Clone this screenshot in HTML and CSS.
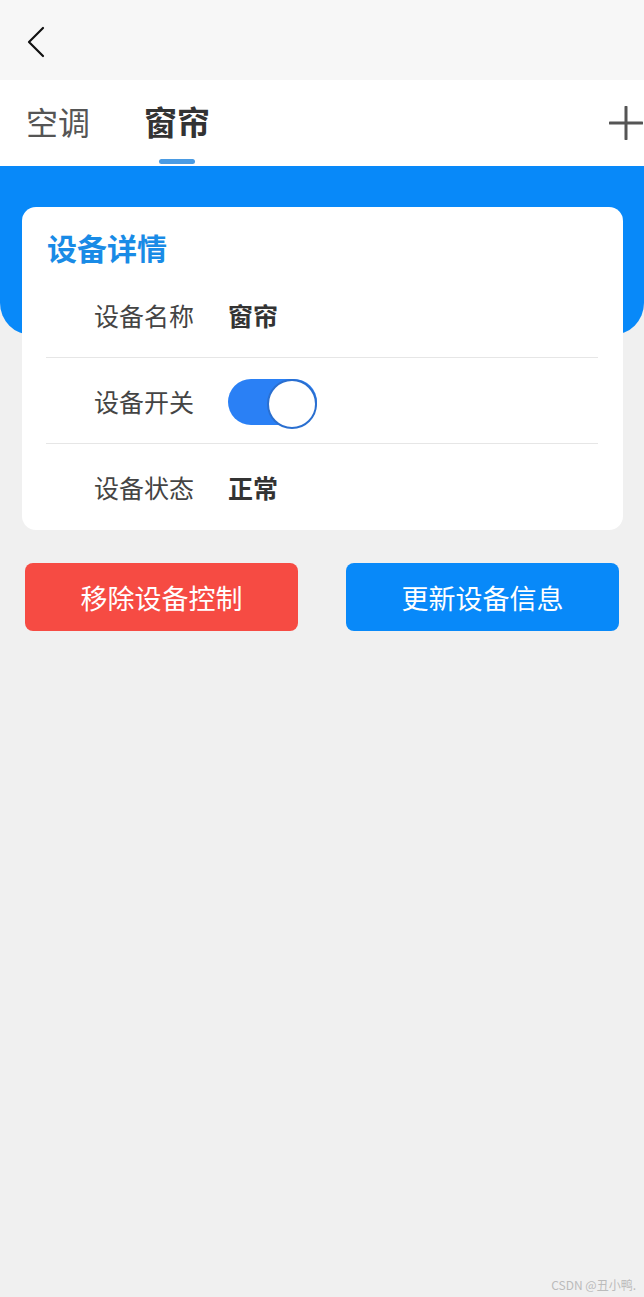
FILE: index.html
```html
<!DOCTYPE html>
<html lang="zh-CN">

<head>
    <meta charset="UTF-8">
    <meta name="viewport" content="width=device-width, initial-scale=1.0">
    <title>设备详情</title>
    <link rel="stylesheet" href="styles.css">
</head>

<body>
    <div class="page">
        <header class="topbar">
            <svg class="back" width="24" height="34" viewBox="0 0 24 34">
                <path d="M19 3 L5 17 L19 31" fill="none" stroke="#111" stroke-width="2.2" stroke-linecap="round" stroke-linejoin="round" />
            </svg>
        </header>

        <nav class="tabs">
            <div class="tab">空调</div>
            <div class="tab active">窗帘</div>
            <svg class="add" width="34" height="34" viewBox="0 0 34 34">
                <path d="M17 1 V33 M1 17 H33" fill="none" stroke="#555" stroke-width="3" stroke-linecap="round" />
            </svg>
        </nav>

        <div class="band"></div>

        <section class="card">
            <h2 class="card-title">设备详情</h2>
            <div class="row">
                <span class="label">设备名称</span>
                <span class="value">窗帘</span>
            </div>
            <div class="row">
                <span class="label">设备开关</span>
                <label class="switch">
                    <input type="checkbox" checked>
                    <span class="knob"></span>
                </label>
            </div>
            <div class="row">
                <span class="label">设备状态</span>
                <span class="value">正常</span>
            </div>
        </section>

        <div class="actions">
            <button class="btn btn-red">移除设备控制</button>
            <button class="btn btn-blue">更新设备信息</button>
        </div>

        <div class="watermark">CSDN @丑小鸭.</div>
    </div>
</body>

</html>
```

FILE: styles.css
```css
* {
    margin: 0;
    padding: 0;
    box-sizing: border-box;
    font-family: "Noto Sans CJK SC", "Noto Sans", sans-serif;
}

body {
    background: #f0f0f0;
    color: #333;
}

.page {
    min-height: 1297px;
    display: flex;
    flex-direction: column;
}

.topbar {
    height: 80px;
    background: #f7f7f7;
    display: flex;
    align-items: center;
    padding-left: 24px;
}

.back {
    display: block;
    margin-top: 3px;
}

.tabs {
    height: 86px;
    background: #ffffff;
    display: flex;
    align-items: center;
    padding-left: 26px;
    gap: 54px;
    position: relative;
}

.tab {
    font-size: 32px;
    line-height: 40px;
    color: #555;
    position: relative;
    margin-top: -4px;
}

.tab.active {
    font-weight: bold;
    color: #333;
    font-size: 33px;
}

.tab.active::after {
    content: "";
    position: absolute;
    left: 50%;
    bottom: -23px;
    width: 36px;
    height: 5px;
    margin-left: -18px;
    border-radius: 3px;
    background: #4a9be3;
}

.add {
    margin-left: auto;
    margin-right: 1px;
}

.band {
    height: 169px;
    background: #0889f9;
    border-radius: 0 0 32px 32px;
}

.card {
    margin: -128px 21px 0 22px;
    background: #ffffff;
    border-radius: 14px;
    padding: 19px 25px 0 24px;
}

.card-title {
    font-size: 30px;
    line-height: 42px;
    color: #198be6;
    font-weight: bold;
    padding-left: 1px;
    margin-bottom: 4px;
}

.row {
    height: 86px;
    display: flex;
    align-items: center;
    padding-left: 48px;
    border-bottom: 1px solid #e6e6e6;
}

.row:last-child {
    border-bottom: none;
}

.label {
    width: 134px;
    font-size: 25px;
    color: #444;
}

.value {
    font-size: 25px;
    font-weight: bold;
    color: #333;
}

.switch {
    display: block;
    width: 89px;
    height: 46px;
    position: relative;
    margin-top: 2px;
}

.switch input {
    display: none;
}

.switch .knob {
    position: absolute;
    inset: 0;
    border-radius: 23px;
    background: #2a80f5;
}

.switch .knob::after {
    content: "";
    position: absolute;
    right: 0;
    top: 0;
    width: 46px;
    height: 46px;
    border-radius: 50%;
    background: #ffffff;
    border: 2px solid #2a6fd0;
}

.actions {
    display: flex;
    justify-content: space-between;
    padding: 33px 25px 0 25px;
}

.btn {
    width: 273px;
    height: 68px;
    border: none;
    border-radius: 8px;
    color: #ffffff;
    font-size: 27px;
}

.btn-red {
    background: #f64b43;
}

.btn-blue {
    background: #0889f9;
}

.watermark {
    margin-top: auto;
    align-self: flex-end;
    font-size: 12px;
    color: #bbb;
    padding: 0 8px 4px 0;
}
```
